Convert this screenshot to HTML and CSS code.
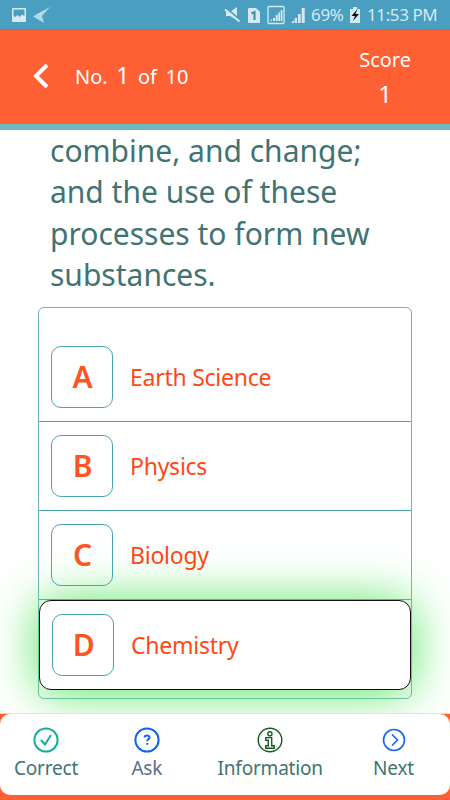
FILE: index.html
```
<!DOCTYPE html>
<html lang="en">
<head>
    <meta charset="UTF-8">
    <meta name="viewport" content="width=device-width, initial-scale=1.0">
    <title>Science Quiz</title>
    <link rel="stylesheet" href="styles.css">
</head>
<body>
    <div class="status-bar">
        <svg class="notifications" width="42" height="20" viewBox="0 0 42 20">
            <path fill-rule="evenodd" d="M2 3h12q1 0 1 1v12q0 1-1 1H2q-1 0-1-1V4q0-1 1-1zM2.500 4.500V11l2 1 2-2 2 2 2.500-2.500L13.500 11V4.500z"/>
            <path d="M22 11.500L39 2 28 10z"/>
            <path d="M22 11.500L28 10 39 2 31 11 33 18z" opacity=".75"/>
        </svg>
        <div class="system">
            <svg class="signals" width="83" height="20" viewBox="0 0 83 20">
                <path d="M2 7h4l7-5v13L6 11H2z"/>
                <path class="slash" d="M2 3L16 15"/>
                <path class="mark" d="M1 4.500L15.500 16.500"/>
                <path d="M25 3h7l4 4v10q0 1-1 1H25q-1 0-1-1V4q0-1 1-1z"/>
                <path class="sim" d="M27.500 8.500L30.500 7v8"/>
                <rect class="frame" x="44" y="1.500" width="16" height="17" rx="1"/>
                <path d="M46 16l2-2v2zM49 13h2v3h-2zM51.700 10h2v6h-2zM54.300 7.500h1.700V16h-1.700zM56.700 5h1.700v11h-1.700z"/>
                <path d="M67 18l3-3v3zM70.700 13H73v5h-2.300zM74 9h2.700v9H74zM77.700 3h3v15h-3z"/>
            </svg>
            <span class="percent">69%</span>
            <svg class="battery" width="12" height="18" viewBox="0 0 12 18">
                <path d="M4 1h4v2h3v14H1V3h3z"/>
                <path class="bolt" d="M8.500 3L2.500 10H6l-2 5 6-7H6.500z"/>
            </svg>
            <span class="clock">11:53 PM</span>
        </div>
    </div>

    <div class="header">
        <svg class="back" width="18" height="28" viewBox="0 0 18 28">
            <path d="M15 3L4 14 15 25"/>
        </svg>
        <div class="progress">No. <span class="current">1</span> of 10</div>
        <div class="score">
            <div>Score</div>
            <div class="points">1</div>
        </div>
    </div>

    <div class="content">
        <p class="question">combine, and change;<br>and the use of these<br>processes to form new<br>substances.</p>
        <div class="options">
            <div class="option">
                <span class="letter">A</span>
                <span>Earth Science</span>
            </div>
            <div class="option">
                <span class="letter">B</span>
                <span>Physics</span>
            </div>
            <div class="option">
                <span class="letter">C</span>
                <span>Biology</span>
            </div>
            <div class="option selected">
                <span class="letter">D</span>
                <span>Chemistry</span>
            </div>
        </div>
    </div>

    <div class="footer">
        <div class="actions">
            <div class="action correct">
                <svg width="26" height="26" viewBox="0 0 26 26">
                    <circle cx="13" cy="13" r="11.600"/>
                    <path d="M8 13l4 4.500L18 8"/>
                </svg>
                <span>Correct</span>
            </div>
            <div class="action ask">
                <svg width="26" height="26" viewBox="0 0 26 26">
                    <circle cx="13" cy="13" r="11.600"/>
                    <path d="M10.500 10.500q.2-2 2.500-2t2.500 2c0 1.500-2.300 1.700-2.300 3.700M13.200 16v1.700"/>
                </svg>
                <span>Ask</span>
            </div>
            <div class="action info">
                <svg width="26" height="26" viewBox="0 0 26 26">
                    <circle cx="13" cy="13" r="11.800"/>
                    <circle cx="12.900" cy="6.800" r="2.100"/>
                    <path d="M8.800 10.600h5.900v8.200h2.500v2.500H8.800v-2.500h2.500v-5.500H8.800z"/>
                </svg>
                <span>Information</span>
            </div>
            <div class="action next">
                <svg width="26" height="26" viewBox="0 0 26 26">
                    <circle cx="13" cy="13" r="10.500"/>
                    <path d="M11 7.500l5.500 5.500-5.500 5.500"/>
                </svg>
                <span>Next</span>
            </div>
        </div>
    </div>
</body>
</html>
```
FILE: styles.css
```
* {
    box-sizing: border-box;
}
body {
    margin: 0;
    height: 800px;
    display: flex;
    flex-direction: column;
    overflow: hidden;
    font-family: "Noto Sans", sans-serif;
    background-color: #fff;
}
svg {
    display: block;
    flex: none;
}
.status-bar {
    height: 30px;
    padding: 0 14px 0 11px;
    display: flex;
    align-items: center;
    justify-content: space-between;
    background-color: #4a9ebf;
    border-bottom: 1px solid #4f8fa0;
    color: #d3eaf4;
    fill: #d3eaf4;
}
.system {
    display: flex;
    align-items: center;
    font-size: 17px;
}
.slash {
    stroke: #4a9ebf;
    stroke-width: 2;
}
.mark {
    stroke: #d3eaf4;
    stroke-width: 2;
}
.sim {
    fill: none;
    stroke: #3d8cab;
    stroke-width: 2;
}
.frame {
    fill: none;
    stroke: #d3eaf4;
    stroke-width: 1.3;
}
.percent {
    margin-left: 4px;
    width: 34px;
    letter-spacing: -0.3px;
}
.battery {
    margin: 0 6px 0 4px;
}
.bolt {
    fill: #111;
}
.clock {
    width: 69px;
    white-space: nowrap;
    letter-spacing: -0.4px;
}
.header {
    height: 100px;
    padding: 0 39px 0 32px;
    display: flex;
    align-items: center;
    background-color: #ff6033;
    border-bottom: 6px solid #6fb8c1;
    color: #fff;
    font-size: 20px;
}
.back {
    margin-bottom: 2px;
    fill: none;
    stroke: #fff;
    stroke-width: 4;
}
.progress {
    margin: 0 0 2px 25px;
    word-spacing: 3.4px;
    line-height: 30px;
}
.current {
    font-size: 23px;
}
.score {
    margin: 0 0 1px auto;
    text-align: center;
    line-height: 27px;
}
.points {
    margin-top: 7px;
    font-size: 24px;
}
.content {
    flex: 1;
    padding: 0 38px;
    overflow: hidden;
}
.question {
    margin: 0 0 12px 12px;
    font-size: 30px;
    line-height: 41.3px;
    color: #417373;
    white-space: nowrap;
}
.options {
    height: 392px;
    padding-top: 25px;
    border: 1px solid #6db3bd;
    border-radius: 6px;
}
.option {
    height: 89px;
    padding: 0 0 1px 12px;
    display: flex;
    align-items: center;
    gap: 17px;
    border-bottom: 1px solid #48a5b1;
    color: #ff4814;
    font-size: 23px;
    line-height: 30px;
    letter-spacing: -0.25px;
}
.letter {
    width: 62px;
    height: 62px;
    padding-left: 1px;
    display: flex;
    align-items: center;
    justify-content: center;
    border: 1px solid #48a5b1;
    border-radius: 10px;
    color: #ff5520;
    font-size: 30px;
    font-weight: 600;
}
.selected {
    height: 90px;
    border: 1px solid #1c0716;
    border-radius: 12px;
    background-color: #fff;
    box-shadow: 0 2px 50px #50e55a;
}
.footer {
    height: 87px;
    border-top: 1px solid #dde3dd;
    background-color: #ff6033;
}
.actions {
    height: 81px;
    padding: 13px 36px 0 14px;
    display: flex;
    justify-content: space-between;
    background-color: #fff;
    border-radius: 10px;
}
.action {
    display: flex;
    flex-direction: column;
    align-items: center;
    font-size: 19px;
    line-height: 30px;
    letter-spacing: -0.2px;
    color: #417373;
}
.action svg {
    fill: none;
    stroke-width: 2;
}
.correct svg {
    stroke: #16b197;
}
.ask {
    margin-left: 3px;
    color: #5a6f8c;
}
.ask svg {
    stroke: #0866ef;
}
.info {
    margin-left: 5px;
}
.info svg {
    stroke: #125b1b;
    stroke-width: 1.4;
}
.next svg {
    stroke: #1268ed;
    stroke-width: 1.6;
}
```
